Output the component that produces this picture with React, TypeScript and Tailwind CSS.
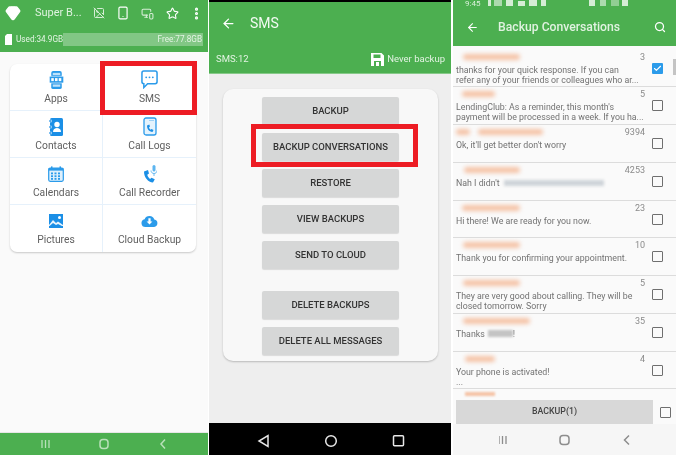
import React from "react";
import { ArrowLeft, Search, Star, EllipsisVertical, Gem, MonitorSmartphone, Smartphone, ImageOff, Check } from "lucide-react";

const font = "font-['Roboto','Liberation_Sans',sans-serif]";

function AppIcon() {
  return (
    <svg width="15" height="18" viewBox="0 0 20 24">
      <rect x="3" y="0" width="14" height="24" rx="2.5" fill="#2b9bea" />
      <rect x="0.5" y="7" width="19" height="9" rx="1.5" fill="#2b9bea" stroke="#fff" strokeWidth="0.8" />
      <rect x="5" y="2.5" width="10" height="3" fill="#bfe2fa" />
      <rect x="5" y="18" width="10" height="3" fill="#bfe2fa" />
      <rect x="3" y="9.5" width="3.4" height="4" fill="#fff" />
      <rect x="8" y="9.5" width="3.4" height="4" fill="#fff" />
      <rect x="13" y="9.5" width="3.4" height="4" fill="#fff" />
    </svg>
  );
}
function SmsIcon() {
  return (
    <svg width="17" height="19" viewBox="0 0 18 20">
      <path d="M3 1h12a2 2 0 0 1 2 2v9.500a2 2 0 0 1-2 2H7l-4 4v-4a2 2 0 0 1-2-2V3a2 2 0 0 1 2-2z" fill="none" stroke="#2b9bea" strokeWidth="1.600" />
      <circle cx="5.500" cy="7.700" r="1" fill="#2b9bea" />
      <circle cx="9" cy="7.700" r="1" fill="#2b9bea" />
      <circle cx="12.500" cy="7.700" r="1" fill="#2b9bea" />
    </svg>
  );
}
function ContactsIcon() {
  return (
    <svg width="14" height="18" viewBox="0 0 14 18">
      <rect x="1" y="0" width="13" height="18" rx="1.500" fill="#1b8fe6" />
      <rect x="0" y="2" width="2.400" height="2" fill="#1b8fe6" stroke="#fff" strokeWidth="0.500" />
      <rect x="0" y="8" width="2.400" height="2" fill="#1b8fe6" stroke="#fff" strokeWidth="0.500" />
      <rect x="0" y="14" width="2.400" height="2" fill="#1b8fe6" stroke="#fff" strokeWidth="0.500" />
      <circle cx="8" cy="6.500" r="2.700" fill="#fff" />
      <path d="M4 14c0-3 2-4 4-4s4 1 4 4z" fill="#fff" />
    </svg>
  );
}
function CallLogIcon() {
  return (
    <svg width="14" height="19" viewBox="0 0 14 19">
      <rect x="1" y="1" width="12" height="17" rx="2" fill="#e4f3fd" stroke="#2b9bea" strokeWidth="1.300" />
      <path d="M4 8.500c0 3.500 2 6 5.500 6.500l1-2-2-1-1 .8c-.8-.6-1.300-1.500-1.500-2.500l1-.8-.7-2z" fill="#1b8fe6" />
      <rect x="6" y="3" width="5" height="1" fill="#9fd2f5" />
    </svg>
  );
}
function CalendarIcon() {
  return (
    <svg width="16" height="16" viewBox="0 0 16 16">
      <rect x="0.700" y="2" width="14.600" height="13.300" rx="1.500" fill="#dff0fc" stroke="#2b9bea" strokeWidth="1.200" />
      <rect x="0.700" y="2" width="14.600" height="2.600" fill="#2b9bea" />
      <rect x="3" y="0.400" width="1.500" height="3" fill="#2b9bea" />
      <rect x="11.500" y="0.400" width="1.500" height="3" fill="#2b9bea" />
      {[3, 6.5, 10].map((x) => [6.5, 9.3, 12].map((y) => <rect key={`${x}-${y}`} x={x} y={y} width="2" height="1.800" fill="#2b9bea" />))}
    </svg>
  );
}
function RecorderIcon() {
  return (
    <svg width="14" height="18" viewBox="0 0 14 18">
      <path d="M1 6.500c0 6 4 10.500 9 11l1.800-3.200-3.300-1.600-1.500 1.300c-1.400-1-2.300-2.600-2.700-4.200l1.700-1.300-1-3.500z" fill="#1b8fe6" />
      <rect x="9.500" y="0" width="3" height="6.500" rx="1.500" fill="#5db5f0" />
      <path d="M8 5.500c0 2 1.500 3 3 3s3-1 3-3M11 8.500v2.500" fill="none" stroke="#5db5f0" strokeWidth="0.900" />
    </svg>
  );
}
function PicturesIcon() {
  return (
    <svg width="14" height="14" viewBox="0 0 14 14">
      <rect width="14" height="14" fill="#1b8fe6" />
      <circle cx="10.500" cy="3.500" r="1.500" fill="#fff" />
      <path d="M0 11l4-5 3 3 2-1.500 5 3.500v1H0z" fill="#fff" fillOpacity="0.900" />
      <path d="M0 12.500l4-3.500 3 2 2-1 5 2.500V14H0z" fill="#1b8fe6" />
    </svg>
  );
}
function CloudIcon() {
  return (
    <svg width="17" height="12" viewBox="0 0 18 13">
      <path d="M4.500 13a4.300 4.300 0 0 1-.8-8.500A5.600 5.600 0 0 1 14.200 4.900 4.100 4.100 0 0 1 14 13z" fill="#2b9bea" />
      <path d="M7.800 3.500h2.400v3.500h2L9 10.200 5.800 7h2z" fill="#fff" />
    </svg>
  );
}

const tiles: [React.ReactNode, string][] = [
  [<AppIcon />, "Apps"],
  [<SmsIcon />, "SMS"],
  [<ContactsIcon />, "Contacts"],
  [<CallLogIcon />, "Call Logs"],
  [<CalendarIcon />, "Calendars"],
  [<RecorderIcon />, "Call Recorder"],
  [<PicturesIcon />, "Pictures"],
  [<CloudIcon />, "Cloud Backup"],
];

function Panel1() {
  return (
    <div className="w-[208px] h-full flex flex-col bg-[#fafafa] blur-[0.3px]">
      <div className="h-[52px] bg-[#4caf50] flex flex-col text-white shrink-0">
        <div className="h-[26px] mt-[0px] flex items-center pl-[5px] pr-[3px]">
          <Gem size={16} fill="#fff" stroke="#fff" className="shrink-0" />
          <span className="ml-[14px] text-[11px] w-[47px] text-[#dff2df] whitespace-nowrap">Super B...</span>
          <ImageOff size={12} className="ml-[11px] text-[#d5edd5]" />
          <Smartphone size={14} className="ml-[11px]" />
          <MonitorSmartphone size={13} className="ml-[10.500px] text-[#d5edd5]" />
          <Star size={13} className="ml-[12.500px]" />
          <EllipsisVertical size={15} strokeWidth={3} className="ml-[9.500px]" />
        </div>
        <div className="flex items-center h-[13px] mt-[7px] pl-[5px] pr-[5px] text-[8.200px] text-[#e5f4e5]">
          <svg width="7" height="11" viewBox="0 0 7 11" className="shrink-0"><path d="M2 0h5v11H0V2z" fill="#fff" /></svg>
          <span className="ml-[4px] w-[47px] whitespace-nowrap">Used:34.9GB</span>
          <div className="flex-1 h-[13px] bg-[#82c785] flex items-center justify-end pr-[1px]">Free:77.8GB</div>
        </div>
      </div>
      <div className="flex-1 px-[10px] pt-[12px]">
        <div className="relative w-[186px] h-[188px] rounded-[7px] bg-white shadow-[0_1px_2px_rgba(0,0,0,0.2)] grid grid-cols-2 grid-rows-4">
          {tiles.map(([icon, label], i) => (
            <div
              key={label}
              className={`flex flex-col items-center ${i % 2 === 0 ? "border-r border-[#e6f1fb]" : ""} ${i < 6 ? "border-b border-[#e6f1fb]" : ""}`}
            >
              <div className="h-[27px] mt-[2px] flex items-center justify-center">{icon}</div>
              <span className="text-[10.300px] leading-[12px] text-[#5f5f5f]">{label}</span>
            </div>
          ))}
          <div className="absolute left-[90px] top-[-3px] w-[97px] h-[54px] border-[5px] border-[#ed1c24]" />
        </div>
      </div>
      <div className="h-[23px] bg-[#4caf50] border-t border-[#e6e6e6] flex items-center justify-center shrink-0">
        <svg width="132" height="14" viewBox="0 0 132 14">
          <g fill="none" stroke="#b9e0ba" strokeWidth="1.300">
            <path d="M4 3v8M7.500 3v8M11 3v8" />
            <rect x="62" y="2.500" width="8" height="9" rx="3" strokeWidth="1.500" />
            <path d="M127 2.500l-4 4.500 4 4.500" strokeWidth="1.500" />
          </g>
        </svg>
      </div>
    </div>
  );
}

const buttons = ["BACKUP", "BACKUP CONVERSATIONS", "RESTORE", "VIEW BACKUPS", "SEND TO CLOUD"];

function MidButton({ label }: { label: string }) {
  return (
    <div className="w-[137px] h-[28px] bg-[#d6d7d7] rounded-[2px] shadow-[0_1px_1px_rgba(0,0,0,0.12)] flex items-center justify-center text-[9.500px] font-medium text-[#333] whitespace-nowrap">
      {label}
    </div>
  );
}

function Panel2() {
  return (
    <div className="w-[242px] h-full ml-[1px] flex flex-col bg-[#eeeeee] shrink-0 blur-[0.3px]">
      <div className="h-[2px] bg-black shrink-0" />
      <div className="h-[72px] bg-[#4caf50] text-white shrink-0 flex flex-col">
        <div className="flex items-center h-[42px] pl-[12px]">
          <ArrowLeft size={15} strokeWidth={2} />
          <span className="ml-[14px] text-[14px] text-[#f2faf2]">SMS</span>
        </div>
        <div className="flex items-center justify-between pl-[7px] pr-[6px] h-[18px] mt-[6px] text-[#e2f3e2]">
          <span className="text-[9.500px]">SMS:12</span>
          <div className="flex items-center text-[9.500px]">
            <svg width="13" height="13" viewBox="0 0 13 13" className="mr-[3px]">
              <path fillRule="evenodd" d="M0 0h10.500L13 2.500V13H0zM2.500 1.500v3.500h7V1.500zM3 8v5h7V8z" fill="#fff" />
              <rect x="5" y="9" width="3" height="4" fill="#fff" />
            </svg>
            Never backup
          </div>
        </div>
        <div className="h-[1px] mt-auto bg-[#86c988]" />
      </div>
      <div className="flex-1 pt-[15px] px-[14px]">
        <div className="relative w-[215px] h-[272px] bg-[#f8f8f8] rounded-[10px] shadow-[0_1px_2px_rgba(0,0,0,0.22)] flex flex-col items-center pt-[8px] gap-[8px]">
          {buttons.map((b) => <MidButton key={b} label={b} />)}
          <div className="h-[6px]" />
          <MidButton label="DELETE BACKUPS" />
          <MidButton label="DELETE ALL MESSAGES" />
          <div className="absolute left-[28px] top-[35px] w-[167px] h-[43px] border-[5px] border-[#ed1c24]" />
        </div>
      </div>
      <div className="h-[32px] bg-black flex items-center justify-center shrink-0 pt-[4px]">
        <svg width="150" height="14" viewBox="0 0 150 14">
          <g fill="none" stroke="#e8e8e8" strokeWidth="1.500">
            <path d="M13 1.500v11L4 7z" />
            <circle cx="76" cy="7" r="5.300" />
            <rect x="138.500" y="1.800" width="10" height="10" rx="1" />
          </g>
        </svg>
      </div>
    </div>
  );
}

type R = {
  n: string;
  names: [number, number][];
  lines: string[];
  checked?: boolean;
  blur?: number;
  blur2?: boolean;
  h: number;
};

const rows: R[] = [
  { n: "3", names: [[7, 57]], lines: ["thanks for your quick response. If you can", "refer any of your friends or colleagues who ar..."], checked: true, h: 37 },
  { n: "5", names: [[6, 33]], lines: ["LendingClub: As a reminder, this month's", "payment will be processed in a week. If you ha..."], h: 38 },
  { n: "9394", names: [[0, 14], [8, 65]], lines: ["Ok, it'll get better don't worry"], h: 38 },
  { n: "4253", names: [[8, 56]], lines: ["Nah I didn't"], blur: 100, h: 38 },
  { n: "23", names: [[6, 58]], lines: ["Hi there! We are ready for you now."], h: 37 },
  { n: "10", names: [[7, 57]], lines: ["Thank you for confirming your appointment."], h: 38 },
  { n: "5", names: [[7, 57]], lines: ["They are very good about calling. They will be", "closed tomorrow. Sorry"], h: 38 },
  { n: "35", names: [[7, 67]], lines: ["Thanks"], blur2: true, h: 38 },
  { n: "4", names: [[9, 30]], lines: ["Your phone is activated!", "..."], h: 37 },
];

function Row({ r }: { r: R }) {
  return (
    <div className="flex border-b border-[#dcdcdc] pl-[3px] pr-[13px] overflow-hidden shrink-0" style={{ height: r.h }}>
      <div className="flex-1 min-w-0">
        <div className="flex justify-between h-[12px] mt-[1px]">
          <div className="flex">
            {r.names.map(([l, w], i) => (
              <div key={i} className="h-[6px] mt-[3px] bg-[#f5c3a6] rounded-full blur-[2px]" style={{ marginLeft: l, width: w }} />
            ))}
          </div>
          <span className="text-[9px] leading-[12px] text-[#8a8a8a]">{r.n}</span>
        </div>
        <div className="mt-[1.500px]">
          {r.lines.map((l, i) => (
            <div key={i} className="text-[8.800px] leading-[10px] text-[#727272] whitespace-nowrap flex items-center">
              {l}
              {r.blur ? <span className="inline-block ml-[4px] h-[6px] bg-[#cfd4d9] blur-[1.500px]" style={{ width: r.blur }} /> : null}
              {r.blur2 ? <><span className="inline-block ml-[3px] h-[7px] w-[25px] bg-[#c4c4c4] blur-[1px]" />!</> : null}
            </div>
          ))}
        </div>
      </div>
      <div className="w-[18px] shrink-0 flex justify-end pt-[13px]">
        {r.checked ? (
          <div className="w-[11px] h-[11px] bg-[#2b9bea] rounded-[1px] flex items-center justify-center">
            <Check size={9} strokeWidth={3} className="text-white" />
          </div>
        ) : (
          <div className="w-[11px] h-[11px] border border-[#6f6f6f] rounded-[1px]" />
        )}
      </div>
    </div>
  );
}

function Panel3() {
  return (
    <div className="w-[223px] h-full ml-[2px] flex flex-col bg-[#fafafa] shrink-0 relative overflow-hidden blur-[0.4px]">
      <div className="h-[46px] bg-[#4caf50] text-white shrink-0 flex flex-col">
        <div className="h-[8px] flex items-start pl-[12px] text-[8px] leading-[8px] text-[#d9efd9]">
          <span>9:45</span>
          <svg width="150" height="7" viewBox="0 0 150 7" className="ml-[6px] shrink-0">
            <g fill="#d5edd5">
              <rect x="2" y="0" width="3" height="6" />
              <rect x="8" y="0" width="8" height="6" fillOpacity="0.7" />
              <rect x="20" y="0" width="7" height="6" />
              <rect x="32" y="1" width="7" height="5" />
              <rect x="43" y="0" width="8" height="6" />
              <rect x="55" y="0" width="5" height="6" />
              <rect x="103" y="0" width="6" height="6" />
              <rect x="114" y="0" width="6" height="6" fillOpacity="0.7" />
              <rect x="125" y="0" width="8" height="6" fillOpacity="0.5" />
              <rect x="136" y="0" width="6" height="6" />
            </g>
          </svg>
        </div>
        <div className="flex items-center h-[38px] pl-[13px] pr-[10px]">
          <ArrowLeft size={13} strokeWidth={2} />
          <span className="ml-[19px] text-[12.200px] font-medium text-[#e0f2e0] flex-1">Backup Conversations</span>
          <Search size={12} strokeWidth={2.500} />
        </div>
      </div>
      <div className="h-[4px] shrink-0 bg-[#fafafa]" />
      <div className="flex-1 min-h-0 flex flex-col overflow-hidden relative">
        <div className="absolute right-0 top-[9px] w-[3px] h-[16px] bg-[#c4c4c4]" />
        {rows.map((r, i) => <Row key={i} r={r} />)}
        <div className="px-[3px] flex justify-between pt-[3px]">
          <div className="ml-[9px] w-[30px] h-[4px] bg-[#f5c3a6] blur-[1px]" />
        </div>
      </div>
      <div className="absolute left-[3px] top-[400px] right-[5px] h-[24px] flex items-center gap-[7px]">
        <div className="w-[197px] h-[24px] bg-[#d8d8d8] flex items-center justify-center text-[8.800px] font-medium text-[#444]">BACKUP(1)</div>
        <div className="w-[11px] h-[11px] border border-[#6f6f6f] rounded-[1px]" />
      </div>
      <div className="h-[31px] bg-[#f6f6f6] flex items-center justify-center shrink-0">
        <svg width="132" height="14" viewBox="0 0 132 14">
          <g fill="none" stroke="#8d8d8d" strokeWidth="1.300">
            <path d="M0 3v8M3.500 3v8M7 3v8" />
            <rect x="61" y="2.500" width="9" height="9" rx="3" strokeWidth="1.500" />
            <path d="M130 2.500l-4.500 4.500 4.500 4.500" strokeWidth="1.500" />
          </g>
        </svg>
      </div>
    </div>
  );
}

export default function App() {
  return (
    <div className={`w-[676px] h-[455px] flex overflow-hidden bg-white ${font}`}>
      <Panel1 />
      <Panel2 />
      <Panel3 />
    </div>
  );
}
